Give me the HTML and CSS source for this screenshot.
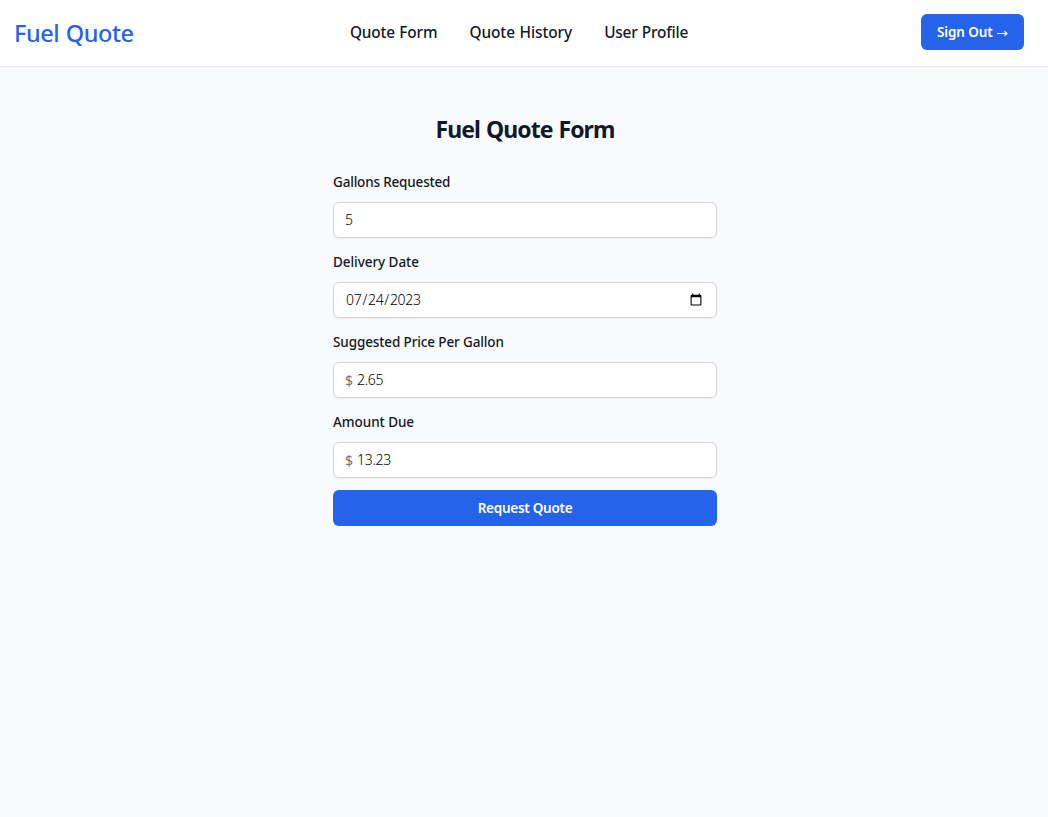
FILE: index.html
```html
<!DOCTYPE html>
<html lang="en">
<head>
<meta charset="utf-8">
<title>Fuel Quote</title>
<link rel="stylesheet" href="styles.css">
</head>
<body>
<header class="header">
  <a class="brand">Fuel Quote</a>
  <nav class="nav">
    <a class="nav-form">Quote Form</a>
    <a class="nav-history">Quote History</a>
    <a class="nav-profile">User Profile</a>
  </nav>
  <button class="button sign-out">Sign Out <svg class="arrow" width="11" height="7" viewBox="0 0 11 7"><path d="M0 3.5H9.5M7.5 1.2L10 3.5L7.5 5.8" fill="none" stroke="currentColor" stroke-width="1.2"/></svg></button>
</header>
<main class="main">
  <h1 class="title">Fuel Quote Form</h1>
  <form class="form">
    <label class="label gallons" for="gallons">Gallons Requested</label>
    <div class="field"><input class="input" id="gallons" type="text" value="5"></div>
    <label class="label date" for="date">Delivery Date</label>
    <div class="field field-date"><input class="input input-date" id="date" type="date" value="2023-07-24"></div>
    <label class="label price" for="price">Suggested Price Per Gallon</label>
    <div class="field"><span class="currency">$</span><input class="input" id="price" type="text" value="2.65"></div>
    <label class="label amount" for="amount">Amount Due</label>
    <div class="field"><span class="currency">$</span><input class="input" id="amount" type="text" value="13.23"></div>
    <button class="button submit" type="button">Request Quote</button>
  </form>
</main>
</body>
</html>
```
FILE: styles.css
```css
* { box-sizing: border-box; }
body {
  margin: 0;
  min-height: 100vh;
  background: #f9fafb;
  color: #111827;
  font-family: "Noto Sans", "Open Sans", sans-serif;
}
.header {
  display: grid;
  grid-template-columns: 1fr auto 1fr;
  align-items: center;
  height: 67px;
  padding: 0 24px 3px 14px;
  background: #fff;
  border-bottom: 1px solid #e5e7eb;
}
.brand {
  color: #2563eb;
  font-size: 23.5px;
  font-weight: 500;
  line-height: 32px;
  letter-spacing: -0.45px;
  word-spacing: 1px;
  padding-top: 3px;
}
.nav {
  display: flex;
  gap: 32px;
  font-size: 15.4px;
  font-weight: 500;
  line-height: 24px;
  padding-top: 3px;
}
.nav-form { letter-spacing: -0.15px; word-spacing: .5px; }
.nav-history { letter-spacing: -0.05px; word-spacing: .5px; }
.nav-profile { letter-spacing: -0.2px; word-spacing: .5px; }
.button {
  height: 36px;
  border: 0;
  border-radius: 6px;
  background: #2563eb;
  color: #fff;
  font: 600 13.5px/20px "Noto Sans", sans-serif;
}
.sign-out {
  justify-self: end;
  width: 103px;
  padding: 0;
  letter-spacing: -0.1px;
  white-space: nowrap;
}
.arrow { margin-left: 1px; }
.main {
  width: 384px;
  margin: 0 auto;
  padding-top: 45px;
  position: relative;
  left: 1px;
}
.title {
  margin: 0;
  font-size: 23px;
  font-weight: 700;
  line-height: 35px;
  text-align: center;
  letter-spacing: -0.95px;
  word-spacing: 1px;
}
.form {
  display: flex;
  flex-direction: column;
  padding-top: 25px;
}
.label {
  height: 20px;
  margin-bottom: 10px;
  font-size: 13.5px;
  font-weight: 500;
  line-height: 20px;
}
.gallons { letter-spacing: -0.18px; }
.date { letter-spacing: -0.06px; }
.price { letter-spacing: -0.12px; }
.amount { letter-spacing: -0.05px; }
.field {
  display: flex;
  align-items: center;
  height: 36px;
  margin-bottom: 14px;
  padding: 0 11px;
  border: 1px solid #d1d5db;
  border-radius: 6px;
  background: #fff;
  box-shadow: 0 1px 2px rgba(0, 0, 0, .05);
  font-size: 14px;
}
.input {
  flex: 1;
  min-width: 0;
  height: 24px;
  margin: 0;
  padding: 0;
  border: 0;
  outline: 0;
  background: transparent;
  color: #000;
  font: 300 14px/24px "Noto Sans", sans-serif;
  letter-spacing: -0.3px;
}
.currency {
  width: 12px;
  color: #6b7280;
  font-weight: 400;
}
.submit {
  margin-top: -2px;
  padding: 0;
  letter-spacing: -0.27px;
}
```
